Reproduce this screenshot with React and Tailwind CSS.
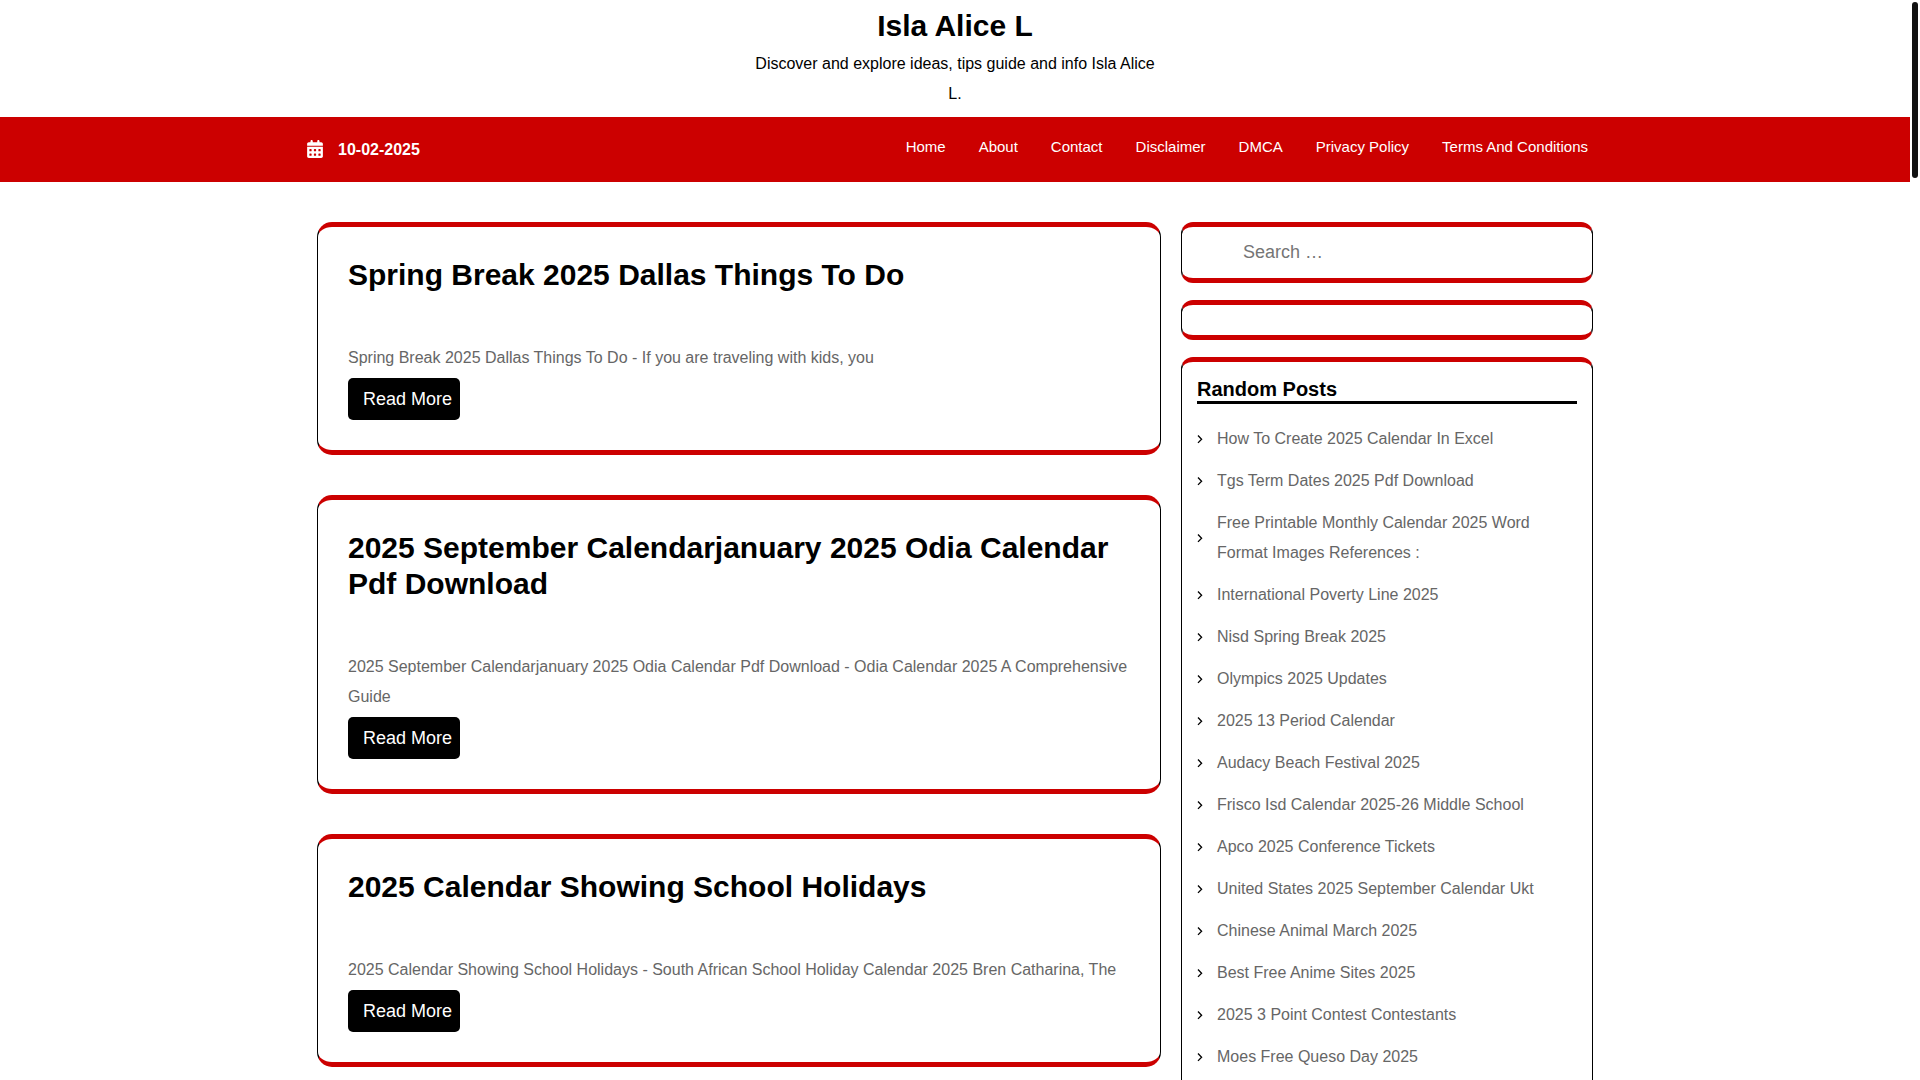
import { FaCalendarDays } from 'react-icons/fa6'

const NAV_LINKS = ['Home', 'About', 'Contact', 'Disclaimer', 'DMCA', 'Privacy Policy', 'Terms And Conditions']

const POSTS = [
  {
    title: 'Spring Break 2025 Dallas Things To Do',
    excerpt: 'Spring Break 2025 Dallas Things To Do - If you are traveling with kids, you',
  },
  {
    title: '2025 September Calendarjanuary 2025 Odia Calendar Pdf Download',
    excerpt:
      '2025 September Calendarjanuary 2025 Odia Calendar Pdf Download - Odia Calendar 2025 A Comprehensive Guide',
  },
  {
    title: '2025 Calendar Showing School Holidays',
    excerpt:
      '2025 Calendar Showing School Holidays - South African School Holiday Calendar 2025 Bren Catharina, The',
  },
]

const RANDOM_POSTS = [
  'How To Create 2025 Calendar In Excel',
  'Tgs Term Dates 2025 Pdf Download',
  'Free Printable Monthly Calendar 2025 Word Format Images References :',
  'International Poverty Line 2025',
  'Nisd Spring Break 2025',
  'Olympics 2025 Updates',
  '2025 13 Period Calendar',
  'Audacy Beach Festival 2025',
  'Frisco Isd Calendar 2025-26 Middle School',
  'Apco 2025 Conference Tickets',
  'United States 2025 September Calendar Ukt',
  'Chinese Animal March 2025',
  'Best Free Anime Sites 2025',
  '2025 3 Point Contest Contestants',
  'Moes Free Queso Day 2025',
]

function Chevron() {
  return (
    <svg viewBox="0 0 6 10" className="h-2.5 w-1.5 shrink-0" fill="none" stroke="#000" strokeWidth="1.3" aria-hidden="true">
      <path d="M1 1.5 4.6 5.2 1 8.9" />
    </svg>
  )
}

function PostCard({ title, excerpt }) {
  return (
    <article className="rounded-[15px] border-x border-y-5 border-x-black border-y-[#cc0000] p-[30px]">
      <h2 className="text-[30px] leading-9 font-bold text-black">
        <a href="#">{title}</a>
      </h2>
      <p className="mt-[50px]">{excerpt}</p>
      <a href="#" className="mt-[5px] inline-flex w-28 rounded-[5px] bg-black py-1.5 pl-[15px] text-lg leading-[30px] text-white">
        Read More
      </a>
    </article>
  )
}

// Red-edged box shared by every sidebar widget
function Widget({ children }) {
  return (
    <section className="rounded-xl border-x border-y-5 border-x-black border-y-[#cc0000] px-[15px]">{children}</section>
  )
}

function Sidebar() {
  return (
    <aside className="flex w-1/3 flex-col gap-[17px] px-2.5">
      <Widget>
        <form role="search" className="py-2.5 pl-[46px]">
          <input
            type="search"
            aria-label="Search"
            placeholder="Search …"
            className="block h-[31px] w-full text-lg outline-none placeholder:text-[#757575]"
          />
        </form>
      </Widget>
      <Widget>
        <div className="h-[30px]" />
      </Widget>
      <Widget>
        <h2 className="mt-[15px] border-b-3 border-black text-xl leading-7 font-bold text-black">
          <span className="block h-6 leading-6">Random Posts</span>
        </h2>
        <ul className="mt-[14px] pb-[15px]">
          {RANDOM_POSTS.map((post) => (
            <li key={post} className="flex items-center gap-[14px] py-1.5">
              <Chevron />
              <a href="#">{post}</a>
            </li>
          ))}
        </ul>
      </Widget>
    </aside>
  )
}

export default function App() {
  return (
    <div className="flex h-screen overflow-hidden bg-white font-['Liberation_Sans',Arial,sans-serif] text-base leading-[30px] text-[#666]">
      <div className="min-w-0 flex-1">
        <header>
          <div className="flex flex-col items-center py-2 text-center text-black">
            <h1 className="text-[30px] leading-9 font-bold">
              <a href="#">Isla Alice L</a>
            </h1>
            <p className="mt-[5px] w-[408px] max-w-full">Discover and explore ideas, tips guide and info Isla Alice L.</p>
          </div>
          <div className="bg-[#cc0000] text-white">
            <div className="mx-auto flex h-[65px] max-w-[1296px] items-center justify-between">
              <div className="flex items-center gap-[15px]">
                <FaCalendarDays className="mb-0.5 h-[18px] w-4" />
                <time dateTime="2025-02-10" className="font-bold">
                  10-02-2025
                </time>
              </div>
              <nav className="flex gap-[33px] pr-[15px] pb-1.5 text-[15px]">
                {NAV_LINKS.map((link) => (
                  <a key={link} href="#">
                    {link}
                  </a>
                ))}
              </nav>
            </div>
          </div>
        </header>

        <main className="mx-auto flex max-w-[1296px] items-start pt-10">
          <div className="flex w-2/3 flex-col gap-10 px-2.5">
            {POSTS.map((post) => (
              <PostCard key={post.title} {...post} />
            ))}
          </div>
          <Sidebar />
        </main>
      </div>

      {/* scroll track */}
      <div className="w-2.5 shrink-0 p-0.5">
        <div className="h-44 w-1.5 rounded-full bg-[#111]" />
      </div>
    </div>
  )
}
